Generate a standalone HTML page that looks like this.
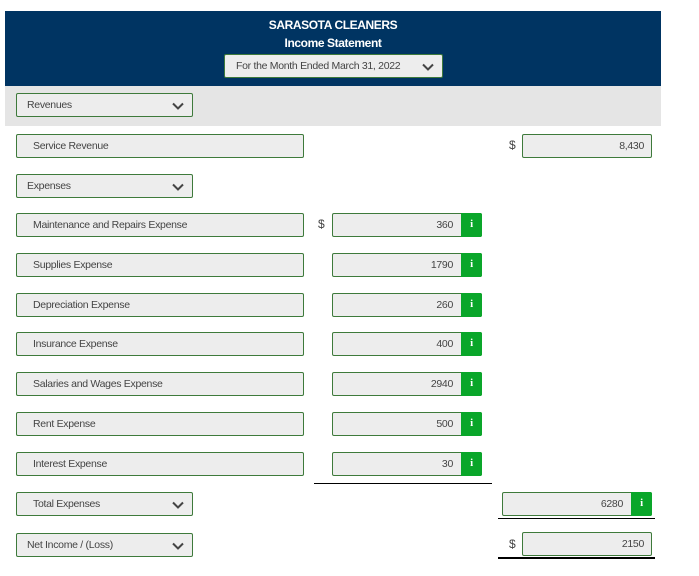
<!DOCTYPE html>
<html><head><style>
*{margin:0;padding:0;box-sizing:border-box}
body{width:699px;height:576px;background:#fff;position:relative;font-family:"Liberation Sans",sans-serif;overflow:hidden}
.a{position:absolute}
.hdr{left:5px;top:11px;width:656px;height:75px;background:#003462}
.band{left:5px;top:86px;width:656px;height:40px;background:#e5e5e5}
.t{color:#fff;font-weight:bold;font-size:12px;width:100%;text-align:center;letter-spacing:-0.4px}
.box{position:absolute;height:24px;background:#ededed;border:1px solid #3e7a3b;border-radius:2px;font-size:10.5px;color:#444;line-height:22px;letter-spacing:-0.3px;white-space:nowrap}
.lbl{padding-left:16px}
.dd{padding-left:10px}
.chev{position:absolute;right:8px;top:8px}
.num{text-align:right;padding-right:7px}
.inf{position:absolute;right:-1px;top:-1px;width:21px;height:24px;background:#0aa62a;border-radius:0 2px 2px 0;color:#fff;font-weight:bold;font-size:11px;text-align:center;line-height:23px;font-family:"Liberation Serif",serif}
.d{position:absolute;font-size:12px;color:#444}
.ln{position:absolute;height:1px;background:#000}
</style></head><body>
<div class="a hdr"></div>
<div class="a band"></div>
<div class="a t" style="left:5px;width:656px;top:18px">SARASOTA CLEANERS</div>
<div class="a t" style="left:5px;width:656px;top:36px">Income Statement</div>
<div class="box dd" style="left:224px;top:54px;width:219px;padding-left:11px">For the Month Ended March 31, 2022<svg class="chev" width="12" height="8" viewBox="0 0 12 8"><path d="M1 1.5L6 6.5L11 1.5" stroke="#444" stroke-width="2" fill="none"/></svg></div>

<div class="box dd" style="left:16px;top:93px;width:177px">Revenues<svg class="chev" width="12" height="8" viewBox="0 0 12 8"><path d="M1 1.5L6 6.5L11 1.5" stroke="#444" stroke-width="2" fill="none"/></svg></div>
<div class="box lbl" style="left:16px;top:134px;width:288px">Service Revenue</div>
<div class="d" style="left:509px;top:138px">$</div>
<div class="box num" style="left:522px;top:134px;width:130px">8,430</div>
<div class="box dd" style="left:16px;top:174px;width:177px">Expenses<svg class="chev" width="12" height="8" viewBox="0 0 12 8"><path d="M1 1.5L6 6.5L11 1.5" stroke="#444" stroke-width="2" fill="none"/></svg></div>

<div class="box lbl" style="left:16px;top:213px;width:288px">Maintenance and Repairs Expense</div>
<div class="d" style="left:318px;top:217px">$</div>
<div class="box num" style="left:332px;top:213px;width:150px;padding-right:28px">360<div class="inf">i</div></div>

<div class="box lbl" style="left:16px;top:253px;width:288px">Supplies Expense</div>
<div class="box num" style="left:332px;top:253px;width:150px;padding-right:28px">1790<div class="inf">i</div></div>

<div class="box lbl" style="left:16px;top:293px;width:288px">Depreciation Expense</div>
<div class="box num" style="left:332px;top:293px;width:150px;padding-right:28px">260<div class="inf">i</div></div>

<div class="box lbl" style="left:16px;top:332px;width:288px">Insurance Expense</div>
<div class="box num" style="left:332px;top:332px;width:150px;padding-right:28px">400<div class="inf">i</div></div>

<div class="box lbl" style="left:16px;top:372px;width:288px">Salaries and Wages Expense</div>
<div class="box num" style="left:332px;top:372px;width:150px;padding-right:28px">2940<div class="inf">i</div></div>

<div class="box lbl" style="left:16px;top:412px;width:288px">Rent Expense</div>
<div class="box num" style="left:332px;top:412px;width:150px;padding-right:28px">500<div class="inf">i</div></div>

<div class="box lbl" style="left:16px;top:452px;width:288px">Interest Expense</div>
<div class="box num" style="left:332px;top:452px;width:150px;padding-right:28px">30<div class="inf">i</div></div>
<div class="ln" style="left:314px;top:483px;width:178px"></div>

<div class="box lbl" style="left:16px;top:492px;width:177px">Total Expenses<svg class="chev" width="12" height="8" viewBox="0 0 12 8"><path d="M1 1.5L6 6.5L11 1.5" stroke="#444" stroke-width="2" fill="none"/></svg></div>
<div class="box num" style="left:502px;top:492px;width:150px;padding-right:28px">6280<div class="inf">i</div></div>
<div class="ln" style="left:498px;top:518px;width:157px"></div>

<div class="box dd" style="left:16px;top:533px;width:177px">Net Income / (Loss)<svg class="chev" width="12" height="8" viewBox="0 0 12 8"><path d="M1 1.5L6 6.5L11 1.5" stroke="#444" stroke-width="2" fill="none"/></svg></div>
<div class="d" style="left:509px;top:537px">$</div>
<div class="box num" style="left:522px;top:532px;width:130px">2150</div>
<div class="ln" style="left:498px;top:557px;width:157px;height:2px"></div>
</body></html>
